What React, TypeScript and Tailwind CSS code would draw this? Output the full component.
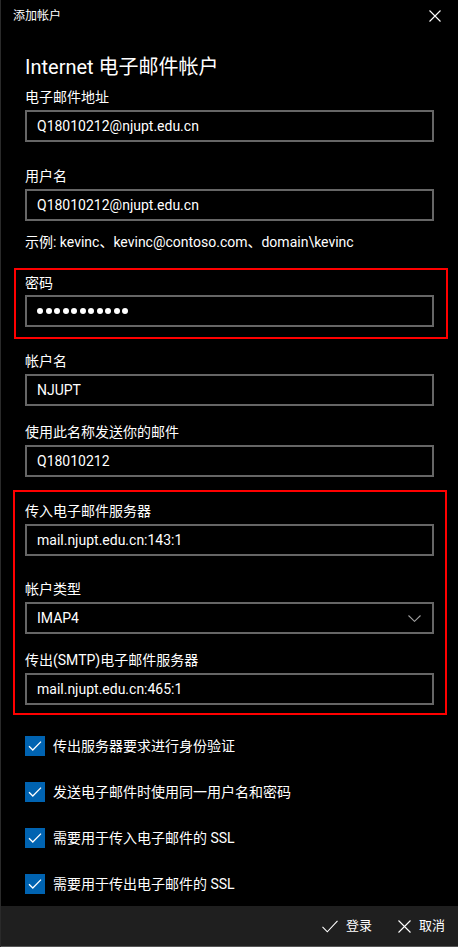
import React from "react";

const font = { fontFamily: '"Segoe UI", Roboto, "Noto Sans CJK SC", sans-serif' };

function Label({ children, className = "" }: { children: React.ReactNode; className?: string }) {
  return <div className={`text-[14px] leading-[20px] text-white ${className}`}>{children}</div>;
}

function Input({ children, className = "" }: { children: React.ReactNode; className?: string }) {
  return (
    <div className={`h-[32px] border-2 border-[#666666] flex items-center pl-[10px] pr-[10px] text-[14px] text-white ${className}`}>
      {children}
    </div>
  );
}

function Check({ label }: { label: string }) {
  return (
    <div className="flex items-center h-[20px] gap-[8px]">
      <div className="w-[20px] h-[20px] bg-[#0063b1] flex items-center justify-center">
        <svg width="14" height="12" viewBox="0 0 14 12" fill="none">
          <path d="M1 6.2 L4.8 10 L13 1.6" stroke="white" strokeWidth="1.3" />
        </svg>
      </div>
      <span className="text-[14px] leading-[20px] text-white">{label}</span>
    </div>
  );
}

export default function App() {
  return (
    <div style={font} className="w-[458px] h-[947px] bg-black flex flex-col border-l border-[#2a2a2a] overflow-hidden">
      <div className="h-[32px] flex items-center justify-between pl-[12px] pr-[17px] shrink-0">
        <span className="text-[12px] text-white leading-[16px]">添加帐户</span>
        <svg width="12" height="12" viewBox="0 0 12 12" fill="none">
          <path d="M0.5 0.5 L11.5 11.5 M11.5 0.5 L0.5 11.5" stroke="white" strokeWidth="1.1" />
        </svg>
      </div>

      <div className="flex flex-col px-[24px]">
        <div className="mt-[21px] text-[20px] leading-[28px] text-white">Internet 电子邮件帐户</div>

        <Label className="mt-[6px] mb-[3px]">电子邮件地址</Label>
        <Input>Q18010212@njupt.edu.cn</Input>

        <Label className="mt-[24px] mb-[3px]">用户名</Label>
        <Input>Q18010212@njupt.edu.cn</Input>

        <div className="mt-[11px] text-[14px] leading-[20px] text-white">示例: kevinc、kevinc@contoso.com、domain\kevinc</div>

        <div className="mt-[16px] ml-[-11px] mr-[-14px] border-2 border-[#ff0000] pt-[3px] pb-[10px] pl-[9px] pr-[12px]">
          <Label className="mb-[2px]">密码</Label>
          <Input className="gap-[2.5px]">
            {Array.from({ length: 11 }).map((_, i) => (
              <span key={i} className="w-[6px] h-[6px] rounded-full bg-white inline-block" />
            ))}
          </Input>
        </div>

        <Label className="mt-[12px] mb-[3px]">帐户名</Label>
        <Input>NJUPT</Input>

        <Label className="mt-[16px] mb-[3px]">使用此名称发送你的邮件</Label>
        <Input>Q18010212</Input>

        <div className="mt-[13px] ml-[-12px] mr-[-13px] border-2 border-[#ff0000] pt-[9px] pb-[8px] pl-[10px] pr-[11px]">
          <Label className="mb-[3px]">传入电子邮件服务器</Label>
          <Input>mail.njupt.edu.cn:143:1</Input>

          <Label className="mt-[23px] mb-[3px]">帐户类型</Label>
          <Input className="justify-between">
            <span>IMAP4</span>
            <svg width="13" height="7" viewBox="0 0 13 7" fill="none" className="mr-[1px]">
              <path d="M0.5 0.5 L6.5 6.3 L12.5 0.5" stroke="#a0a0a0" strokeWidth="1.1" />
            </svg>
          </Input>

          <Label className="mt-[16px] mb-[3px]">传出(SMTP)电子邮件服务器</Label>
          <Input>mail.njupt.edu.cn:465:1</Input>
        </div>

        <div className="mt-[21px] flex flex-col gap-[26px]">
          <Check label="传出服务器要求进行身份验证" />
          <Check label="发送电子邮件时使用同一用户名和密码" />
          <Check label="需要用于传入电子邮件的 SSL" />
          <Check label="需要用于传出电子邮件的 SSL" />
        </div>
      </div>

      <div className="mt-auto h-[41px] bg-[#1f1f1f] border-b border-l border-[#555] flex items-center justify-end pr-[13px] shrink-0 ml-[-1px]">
        <div className="flex items-center gap-[8px]">
          <svg width="16" height="13" viewBox="0 0 16 13" fill="none">
            <path d="M0.5 6.8 L5.3 11.8 L15.5 0.8" stroke="white" strokeWidth="1.1" />
          </svg>
          <span className="text-[13px] leading-[20px] text-white">登录</span>
        </div>
        <div className="flex items-center gap-[8px] ml-[26px]">
          <svg width="13" height="13" viewBox="0 0 13 13" fill="none">
            <path d="M0.5 0.5 L12.5 12.5 M12.5 0.5 L0.5 12.5" stroke="white" strokeWidth="1.1" />
          </svg>
          <span className="text-[13px] leading-[20px] text-white">取消</span>
        </div>
      </div>
    </div>
  );
}
